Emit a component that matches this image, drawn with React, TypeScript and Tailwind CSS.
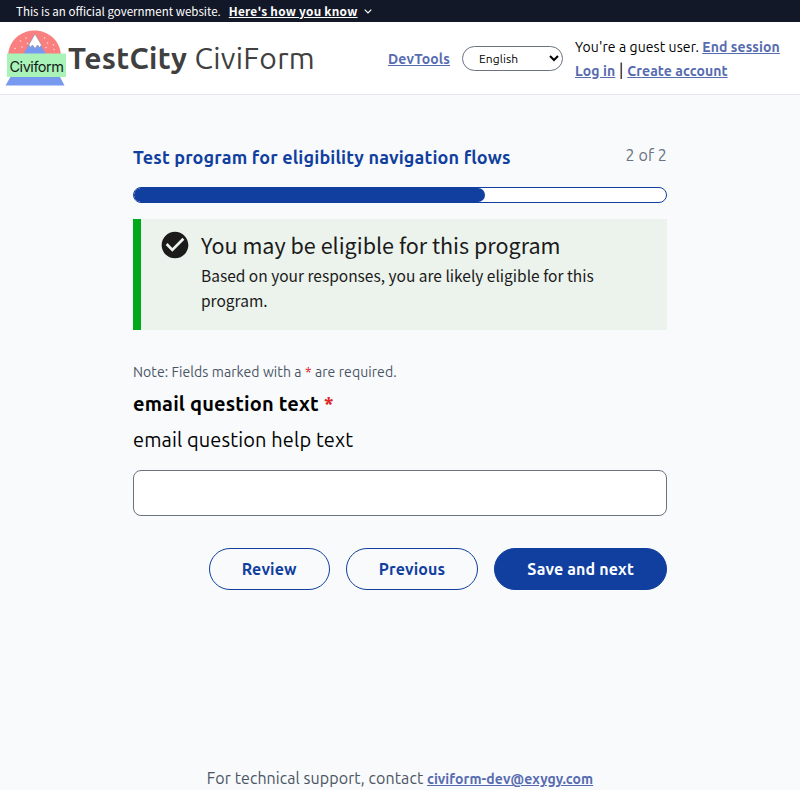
import type { ReactNode } from "react";

const linkClass = "font-bold text-[#566bb0] underline underline-offset-auto";

function Logo() {
  return (
    <svg width="62" height="58" viewBox="0 0 62 58" className="shrink-0" aria-hidden="true">
      <path d="M3 28C3 12 15.500 1.500 29.500 1.500S56 12 56 28Z" fill="#fa8080" />
      <path d="M18.500 25L29.500 5.500L41 25Z" fill="#7799f0" />
      <path d="M24 15.500L30 5L36.500 16L34.500 18.500L32.500 16L30 19.500L27.500 16L25 18.500Z" fill="#fff" stroke="#8b8b96" strokeWidth="0.600" />
      <g fill="#ffdede">
        <circle cx="21" cy="9" r="0.750" />
        <circle cx="15.500" cy="12" r="0.750" />
        <circle cx="22.500" cy="14.500" r="0.750" />
        <circle cx="17" cy="18" r="0.750" />
        <circle cx="10" cy="19.500" r="0.750" />
        <circle cx="39.500" cy="9" r="0.750" />
        <circle cx="42.500" cy="14" r="0.750" />
        <circle cx="48.500" cy="16" r="0.750" />
        <circle cx="41" cy="18.500" r="0.750" />
        <circle cx="49" cy="20.500" r="0.750" />
      </g>
      <path d="M6 47H54.500L59.500 56.500H0.500Z" fill="#7799f0" />
      <rect x="2" y="24.500" width="59" height="23.500" fill="#a9f3b9" />
      <text x="4.500" y="42.600" fontSize="14.500" textLength="54.500" fill="#141c18" fontFamily="Inter, sans-serif">
        Civiform
      </text>
    </svg>
  );
}

function OutlineButton({ children }: { children: ReactNode }) {
  return (
    <button className="h-[42px] rounded-full border border-[#113f9f] px-8 text-base font-bold tracking-[0.15px] text-[#113f9f]">
      {children}
    </button>
  );
}

export default function App() {
  return (
    <div className="flex h-[790px] flex-col bg-[#f8fafc] font-['Ubuntu','Noto_Sans',sans-serif] text-black">
      <div className="flex h-[22px] shrink-0 items-center bg-[#121827] px-4 font-['Noto_Sans_CJK_SC',sans-serif] text-[11.56px] leading-[22px] text-white">
        <span>This is an official government website.</span>
        <button className="ml-2 flex items-center">
          <span className="text-[11.8px] font-bold tracking-[0.26px] underline">Here's how you know</span>
          <svg width="8" height="5" viewBox="0 0 8 5" className="ml-1.5" aria-hidden="true">
            <path d="M0.700 0.700L4 4L7.300 0.700" fill="none" stroke="#fff" strokeWidth="1.200" />
          </svg>
        </button>
      </div>

      <header className="flex h-[73px] shrink-0 items-center border-b border-[#e5e7eb] bg-white pr-5 pl-[5px]">
        <Logo />
        <h1 className="ml-px text-[30px] leading-9 tracking-[0.3px] whitespace-nowrap text-[#404040]">
          <span className="font-bold">TestCity</span> CiviForm
        </h1>
        <div className="ml-auto flex items-center">
          <a className={linkClass + " pt-0.5 text-sm tracking-[0.14px]"}>DevTools</a>
          <select className="mx-3 h-[25px] w-[101px] rounded-full border border-[#6b7280] bg-white px-3 text-xs tracking-[0.1px]">
            <option>English</option>
          </select>
          <div className="w-[205px] text-sm leading-6 tracking-[0.09px] whitespace-nowrap">
            <p className="pt-px">
              You're a guest user. <a className={linkClass}>End session</a>
            </p>
            <p className="-mt-px">
              <a className={linkClass}>Log in</a>
              <span className="text-base"> | </span>
              <a className={linkClass}>Create account</a>
            </p>
          </div>
        </div>
      </header>

      <main className="mx-auto w-[534px] pt-[51px]">
        <div className="flex h-[41px] items-start justify-between">
          <h2 className="text-lg leading-[22px] font-bold tracking-[0.155px] text-[#113f9f]">
            Test program for eligibility navigation flows
          </h2>
          <p className="text-base leading-[18px] tracking-[0.1px] text-[#6b7280]">2 of 2</p>
        </div>
        <div className="h-4 overflow-hidden rounded-full border border-[#113f9f] bg-white">
          <div className="h-full w-[351px] rounded-r-full bg-[#113f9f]" />
        </div>

        <section className="mt-4 flex h-[111px] border-l-8 border-[#00a91c] bg-[#ecf3ec] pt-[10px] pr-5 pl-[18px] font-['Noto_Sans_CJK_SC',sans-serif] text-[#1b1b1b]">
          <svg width="32" height="32" viewBox="0 0 24 24" className="shrink-0" fill="currentColor" aria-hidden="true">
            <path d="M12 2C6.480 2 2 6.480 2 12s4.480 10 10 10 10-4.480 10-10S17.520 2 12 2zm-2 15l-5-5 1.410-1.410L10 14.170l7.590-7.590L19 8l-9 9z" />
          </svg>
          <div className="ml-[10px]">
            <h3 className="mb-0.5 text-[21.55px] leading-8">You may be eligible for this program</h3>
            <p className="text-[15.5px] leading-[25px]">
              Based on your responses, you are likely eligible for this
              <br />
              program.
            </p>
          </div>
        </section>

        <p className="mt-8 text-sm leading-5 tracking-[0.085px] text-[#4b5563]">
          Note: Fields marked with a <span className="text-[#dc2626]">*</span> are required.
        </p>
        <label className="mt-2 block text-xl leading-7 font-bold tracking-[0.17px]">
          email question text <span className="text-[#dc2626]">*</span>
        </label>
        <p className="mt-2 text-xl leading-7 tracking-[0.12px]">email question help text</p>
        <input className="mt-4 block h-[46px] w-full rounded-lg border border-[#6b7280] bg-white px-3" />

        <div className="mt-8 flex justify-end gap-4">
          <OutlineButton>Review</OutlineButton>
          <OutlineButton>Previous</OutlineButton>
          <button className="h-[42px] rounded-full border border-[#113f9f] bg-[#113f9f] px-8 text-base font-bold tracking-[0.15px] text-white">
            Save and next
          </button>
        </div>
      </main>

      <footer className="mt-auto text-center text-base leading-6 tracking-[0.08px] text-[#4b5563]">
        For technical support, contact <a className={linkClass + " text-sm"}>civiform-dev@exygy.com</a>
      </footer>
    </div>
  );
}
